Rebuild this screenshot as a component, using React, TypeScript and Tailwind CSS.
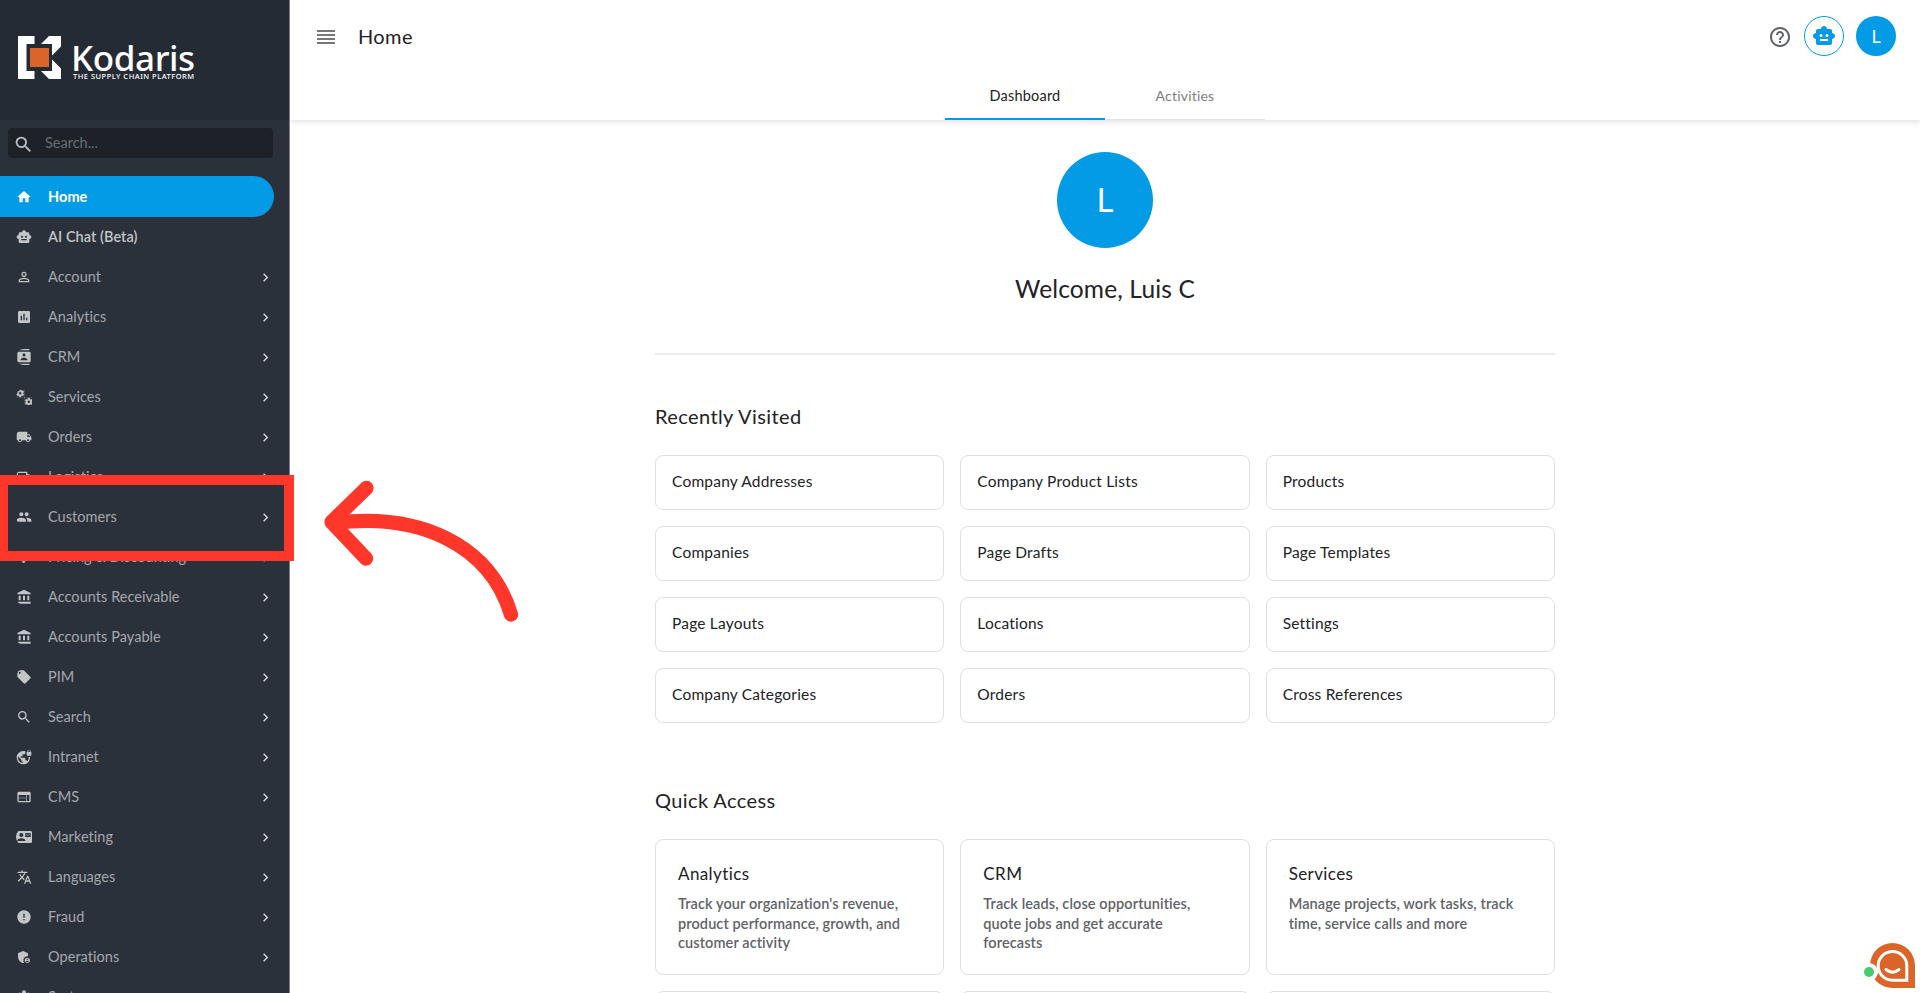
import type { ComponentType } from "react";
import {
  MdAccountBalance,
  MdAdminPanelSettings,
  MdAssessment,
  MdAttachMoney,
  MdChevronRight,
  MdContactMail,
  MdContacts,
  MdError,
  MdHelpOutline,
  MdHome,
  MdLocalOffer,
  MdLocalShipping,
  MdOutlineLocalShipping,
  MdPeople,
  MdPersonOutline,
  MdSearch,
  MdSettings,
  MdSmartToy,
  MdTranslate,
  MdVpnLock,
  MdWeb,
} from "react-icons/md";

type Icon = ComponentType<{ className?: string }>;

function Cogs({ className }: { className?: string }) {
  return (
    <svg viewBox="0 0 24 24" className={className} fill="currentColor">
      <MdSettings x={-1} y={-1} width={18} height={18} stroke="currentColor" strokeWidth={0.8} />
      <MdSettings x={12} y={12} width={13} height={13} stroke="currentColor" strokeWidth={0.8} />
    </svg>
  );
}

const NAV: { icon: Icon; label: string }[] = [
  { icon: MdPersonOutline, label: "Account" },
  { icon: MdAssessment, label: "Analytics" },
  { icon: MdContacts, label: "CRM" },
  { icon: Cogs, label: "Services" },
  { icon: MdLocalShipping, label: "Orders" },
  { icon: MdOutlineLocalShipping, label: "Logistics" },
  { icon: MdPeople, label: "Customers" },
  { icon: MdAttachMoney, label: "Pricing & Discounting" },
  { icon: MdAccountBalance, label: "Accounts Receivable" },
  { icon: MdAccountBalance, label: "Accounts Payable" },
  { icon: MdLocalOffer, label: "PIM" },
  { icon: MdSearch, label: "Search" },
  { icon: MdVpnLock, label: "Intranet" },
  { icon: MdWeb, label: "CMS" },
  { icon: MdContactMail, label: "Marketing" },
  { icon: MdTranslate, label: "Languages" },
  { icon: MdError, label: "Fraud" },
  { icon: MdAdminPanelSettings, label: "Operations" },
  { icon: MdSettings, label: "System" },
];

const RECENT = [
  "Company Addresses",
  "Company Product Lists",
  "Products",
  "Companies",
  "Page Drafts",
  "Page Templates",
  "Page Layouts",
  "Locations",
  "Settings",
  "Company Categories",
  "Orders",
  "Cross References",
];

const QUICK = [
  {
    title: "Analytics",
    lines: ["Track your organization's revenue,", "product performance, growth, and", "customer activity"],
  },
  {
    title: "CRM",
    lines: ["Track leads, close opportunities,", "quote jobs and get accurate", "forecasts"],
  },
  {
    title: "Services",
    lines: ["Manage projects, work tasks, track", "time, service calls and more"],
  },
];

function Logo() {
  return (
    <div className="flex h-[120px] shrink-0 items-start bg-[#252b34] pl-[18px] pt-9 text-white">
      <svg width="43" height="43" viewBox="0 0 43 43">
        <path fill="#fff" d="M0 0h16.5v8H8.5v27h8v8H0z" />
        <path fill="#fff" d="M31 0h12v10.5l-9 9V8H23z" />
        <path fill="#fff" d="M34 23.5l9 9V43H31l-8-8h11z" />
        <path fill="#db6528" d="M12 12h19v19H12z" />
      </svg>
      <div className="ml-[10px] flex flex-col whitespace-nowrap font-['Noto_Sans',sans-serif]">
        <span className="mt-[4px] h-8 text-[35px] font-medium leading-9 tracking-[-0.4px]">Kodaris</span>
        <span className="ml-[2px] mt-[-1px] text-[7.5px] font-medium leading-[10px] tracking-[0.5px]">
          THE SUPPLY CHAIN PLATFORM
        </span>
      </div>
    </div>
  );
}

function Sidebar() {
  return (
    <aside className="flex w-[290px] shrink-0 flex-col overflow-hidden border-r border-[#7c7e87] bg-[#2b313b] text-[#a5a8ac]">
      <Logo />
      <div className="ml-2 mt-2 flex h-[30px] w-[265px] shrink-0 items-center rounded bg-[#1e2228] pl-[5px]">
        <MdSearch className="mt-[2px] size-[21px] text-[#c0c1c3]" />
        <span className="-mt-px ml-[11px] text-[14.5px] text-[#696c70]">Search...</span>
      </div>
      <nav className="mt-[18px] flex flex-col text-[14.5px] tracking-[0.05px]">
        <div className="flex h-[41px] w-[274px] shrink-0 items-center rounded-r-full bg-[#039be5] pl-4 font-bold text-white">
          <MdHome className="size-4" />
          <span className="ml-4">Home</span>
        </div>
        <div className="-mt-px flex h-[41px] shrink-0 items-center pl-4 font-semibold text-[#c3c5c7]">
          <MdSmartToy className="size-4 rounded-l-full" />
          <span className="ml-4">AI Chat (Beta)</span>
        </div>
        {NAV.map(({ icon: ItemIcon, label }) => (
          <div key={label} className="flex h-10 w-[274px] shrink-0 items-center pl-4">
            <ItemIcon className="size-4 overflow-hidden rounded-l-full text-[#c3c5c7]" />
            <span className="ml-4 grow">{label}</span>
            <MdChevronRight className="size-[17px] text-[#d5d6d8]" />
          </div>
        ))}
      </nav>
    </aside>
  );
}

function TopBar() {
  return (
    <header className="relative z-10 h-[120px] shrink-0 bg-white shadow-[0_2px_6px_rgba(0,0,0,0.12)]">
      <div className="flex h-[72px] items-center pl-[27px] pr-6">
        <div className="mt-[2px] flex w-[18px] flex-col gap-[2px]">
          <span className="h-[2px] bg-[#77787c]" />
          <span className="h-[2px] bg-[#77787c]" />
          <span className="h-[2px] bg-[#77787c]" />
          <span className="h-[2px] bg-[#77787c]" />
        </div>
        <h1 className="ml-[23px] grow text-[20px] tracking-[0.4px]">Home</h1>
        <MdHelpOutline className="mt-[2px] size-6 text-[#5f6368]" />
        <div className="ml-3 flex size-10 items-center justify-center rounded-full border border-[#039be5]">
          <MdSmartToy className="size-6 text-[#039be5]" />
        </div>
        <div className="ml-3 flex size-10 items-center justify-center rounded-full bg-[#039be5] text-[18px] text-white">L</div>
      </div>
      <div className="flex h-12 justify-center text-[14.5px] tracking-[0.2px]">
        <div className="flex w-40 items-center justify-center border-b-[2px] border-[#039be5] pt-[2px]">Dashboard</div>
        <div className="flex w-40 items-center justify-center border-b border-[#e4e4e4] text-[14px] text-[#7d7d7d]">Activities</div>
      </div>
    </header>
  );
}

function Dashboard() {
  return (
    <main className="mx-auto flex w-[900px] flex-col">
      <div className="mt-8 flex size-24 items-center justify-center self-center rounded-full bg-[#039be5] text-[33px] text-white">
        L
      </div>
      <h2 className="mt-[23px] self-center text-[24.5px] leading-9 tracking-[0.15px]">Welcome, Luis C</h2>
      <div className="mt-[46px] h-[2px] bg-[#ececec]" />

      <h3 className="mt-[47px] text-[20px] leading-7 tracking-[0.4px]">Recently Visited</h3>
      <div className="mt-[25px] grid grid-cols-3 gap-4">
        {RECENT.map((name) => (
          <div
            key={name}
            className="flex h-[55px] items-center rounded-lg border border-[#e0e0e3] pb-px pl-4 text-[15.5px] tracking-[0.2px]"
          >
            {name}
          </div>
        ))}
      </div>

      <h3 className="mt-[63px] text-[20px] leading-7 tracking-[0.4px]">Quick Access</h3>
      <div className="mt-[25px] grid grid-cols-3 gap-4">
        {QUICK.map(({ title, lines }) => (
          <div key={title} className="flex h-[136px] flex-col rounded-lg border border-[#e0e0e3] px-[22px] pt-[22px]">
            <span className="text-[17px] leading-6 tracking-[0.4px]">{title}</span>
            <p className="mt-2 whitespace-nowrap text-[14.5px] font-semibold leading-[19.6px] tracking-[0.1px] text-[#5f6368]">
              {lines.map((line) => (
                <span key={line} className="block">
                  {line}
                </span>
              ))}
            </p>
          </div>
        ))}
        {[0, 1, 2].map((i) => (
          <div key={i} className="h-[136px] rounded-lg border border-[#e0e0e3]" />
        ))}
      </div>
    </main>
  );
}

function ChatWidget() {
  return (
    <svg className="absolute left-[1860px] top-[940px] z-20" width="60" height="53" viewBox="0 0 60 53">
      <path fill="#db6528" d="M32.5 3A22.5 22.5 0 0 1 55 25.5V48H32.5a22.5 22.5 0 0 1 0-45z" />
      <circle cx="9" cy="32" r="9" fill="#fff" />
      <path
        fill="none"
        stroke="#fff"
        strokeWidth="3"
        d="M32.5 11.5A14.3 14.3 0 0 1 46.8 25.8V40.2H32.5a14.3 14.3 0 0 1 0-28.7z"
      />
      <path fill="none" stroke="#fff" strokeWidth="3" strokeLinecap="round" d="M26 29.5q6.5 5.4 13 0" />
      <circle cx="9" cy="32" r="5" fill="#46cb6d" />
    </svg>
  );
}

export default function App() {
  return (
    <div className="relative flex h-[993px] w-[1920px] overflow-hidden bg-white font-['Lato',sans-serif] text-[#212225]">
      <Sidebar />
      <div className="flex grow flex-col overflow-hidden">
        <TopBar />
        <Dashboard />
      </div>

      {/* callout around the Customers item */}
      <div className="absolute left-0 top-[474.5px] z-20 h-[86px] w-[293.5px] border-x-[8px] border-y-[10px] border-r-[10px] border-[#ff372b]" />
      <svg className="absolute left-[310px] top-[470px] z-20" width="220" height="160" viewBox="310 470 220 160">
        <g fill="none" stroke="#ff372b" strokeWidth="14.3" strokeLinecap="round" strokeLinejoin="round">
          <path d="M366.5 488L331.5 522L366 558.5" />
          <path d="M334 523C420 512 490 545 511 614.5" />
        </g>
      </svg>
      <ChatWidget />
    </div>
  );
}
